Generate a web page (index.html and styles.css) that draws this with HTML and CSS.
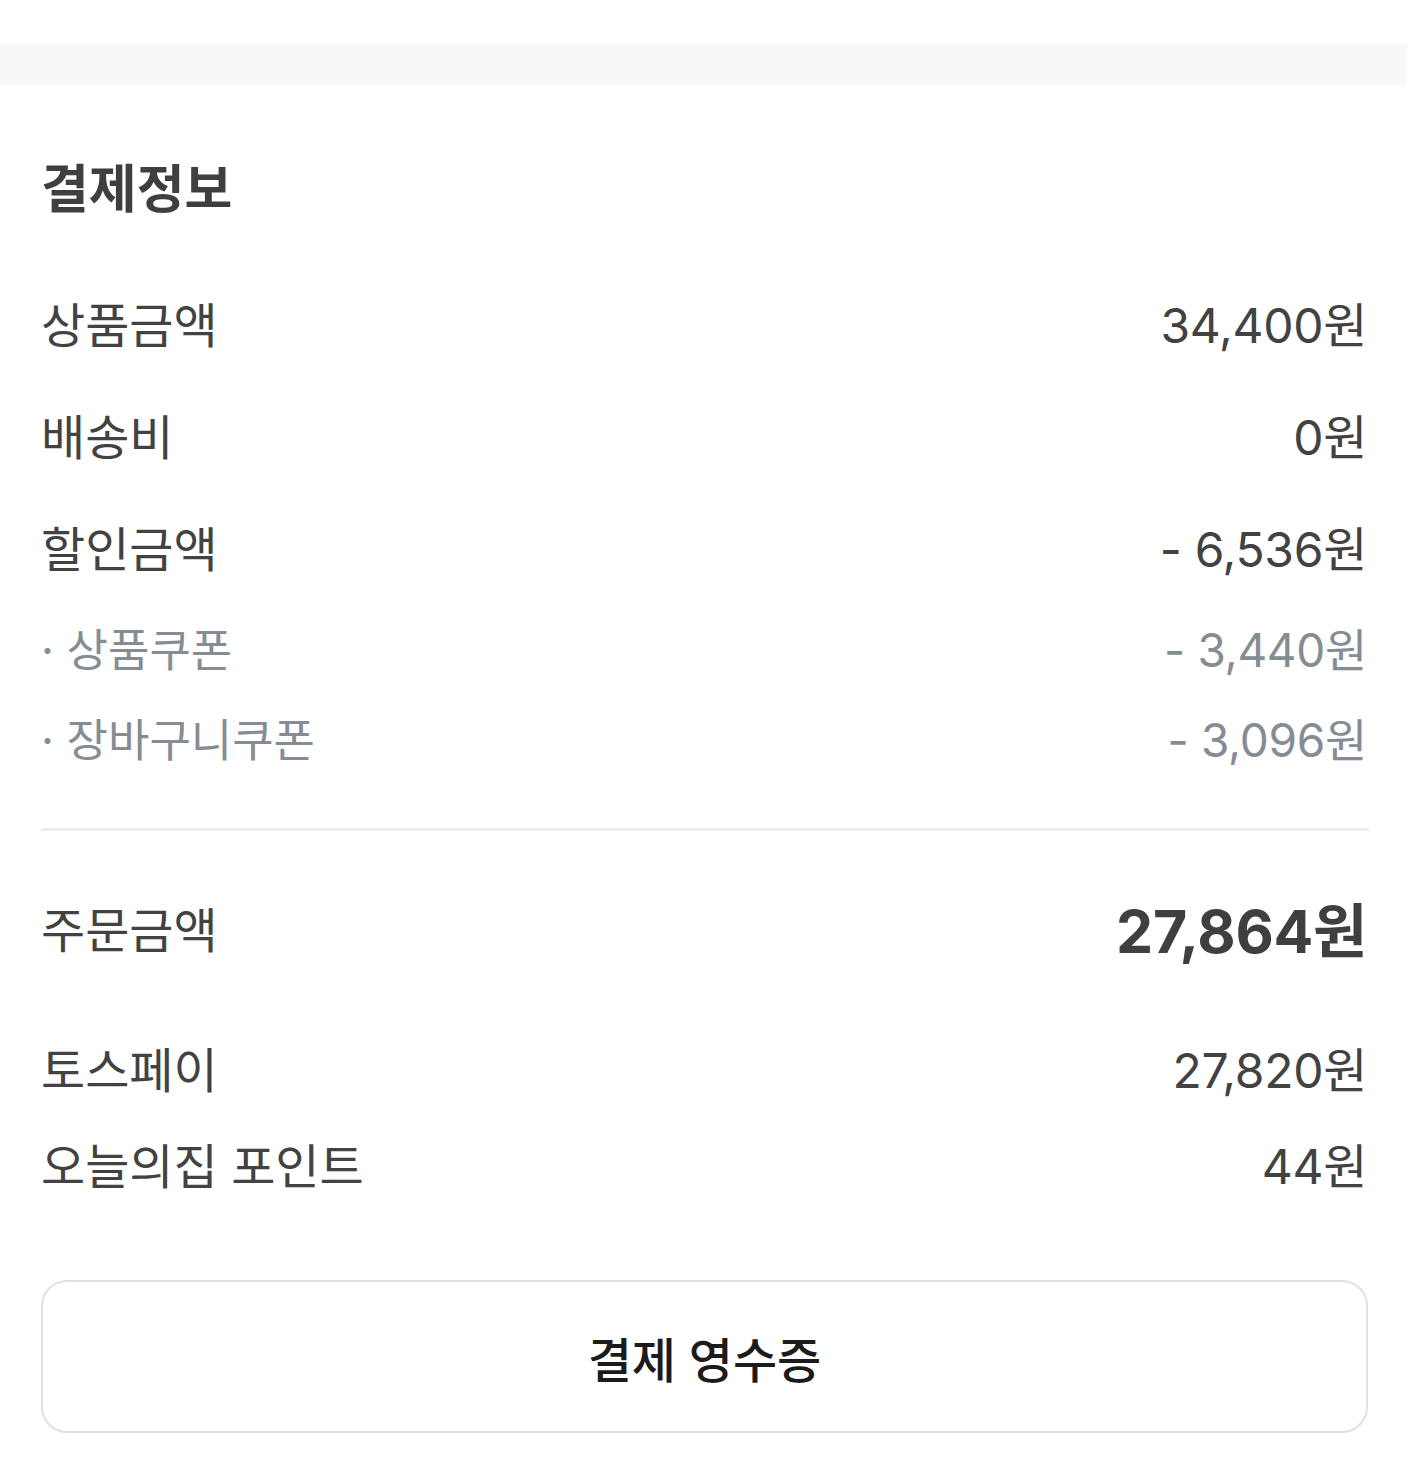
FILE: index.html
```html
<!DOCTYPE html>
<html lang="ko">

<head>
  <meta charset="UTF-8">
  <meta name="viewport" content="width=device-width, initial-scale=1.0">
  <title>결제정보</title>
  <link rel="stylesheet" href="styles.css">
</head>

<body>
  <div class="topSpace"></div>
  <div class="band"></div>

  <section id="payment">
    <h2 class="title">결제정보</h2>

    <div class="row">
      <div class="label">상품금액</div>
      <div class="value">34,400원</div>
    </div>
    <div class="row">
      <div class="label">배송비</div>
      <div class="value">0원</div>
    </div>
    <div class="row">
      <div class="label">할인금액</div>
      <div class="value">- 6,536원</div>
    </div>
    <div class="row sub">
      <div class="label">· 상품쿠폰</div>
      <div class="value">- 3,440원</div>
    </div>
    <div class="row sub">
      <div class="label">· 장바구니쿠폰</div>
      <div class="value">- 3,096원</div>
    </div>

    <div class="divider"></div>

    <div class="row total">
      <div class="label">주문금액</div>
      <div class="value">27,864원</div>
    </div>
    <div class="row method">
      <div class="label">토스페이</div>
      <div class="value">27,820원</div>
    </div>
    <div class="row method">
      <div class="label">오늘의집 포인트</div>
      <div class="value">44원</div>
    </div>

    <button class="receiptBtn">결제 영수증</button>
  </section>
</body>

</html>
```

FILE: styles.css
```css
body {
  font-family: Inter, 'Noto Sans CJK KR', sans-serif;
  background-color: #fff;
  color: #424242;
  margin: 0;
  padding: 0;
}

.topSpace {
  height: 44px;
}

.band {
  height: 41px;
  background-color: #f7f8fa;
}

#payment {
  padding: 72px 40px 40px 42px;
}

.title {
  margin: 3px 0 46px -1px;
  height: 60px;
  line-height: 60px;
  font-size: 52px;
  font-weight: 700;
  color: #3f3f3f;
}

.row {
  display: flex;
  justify-content: space-between;
  align-items: center;
  height: 112px;
  font-size: 48px;
}

.label {
  margin-left: -1px;
}

.value {
  font-size: 48px;
  letter-spacing: -0.3px;
}

.sub {
  height: 90px;
  font-size: 45px;
  color: #858c94;
}

.sub .value {
  font-size: 46px;
}

.divider {
  height: 3px;
  background-color: #eaedf1;
  margin: 46px -2px 40px -1px;
}

.total .value {
  font-size: 59px;
  font-weight: 700;
  color: #3f3f3f;
}

.total {
  margin-bottom: 36px;
}

.method {
  height: 96px;
}

.receiptBtn {
  display: block;
  width: calc(100% + 2px);
  margin: 69px 0 0 -1px;
  height: 153px;
  border: 2px solid #dfe0e2;
  border-radius: 26px;
  background-color: #fff;
  font-family: inherit;
  font-size: 48px;
  font-weight: 500;
  color: #1b1b1b;
  cursor: pointer;
}
```
